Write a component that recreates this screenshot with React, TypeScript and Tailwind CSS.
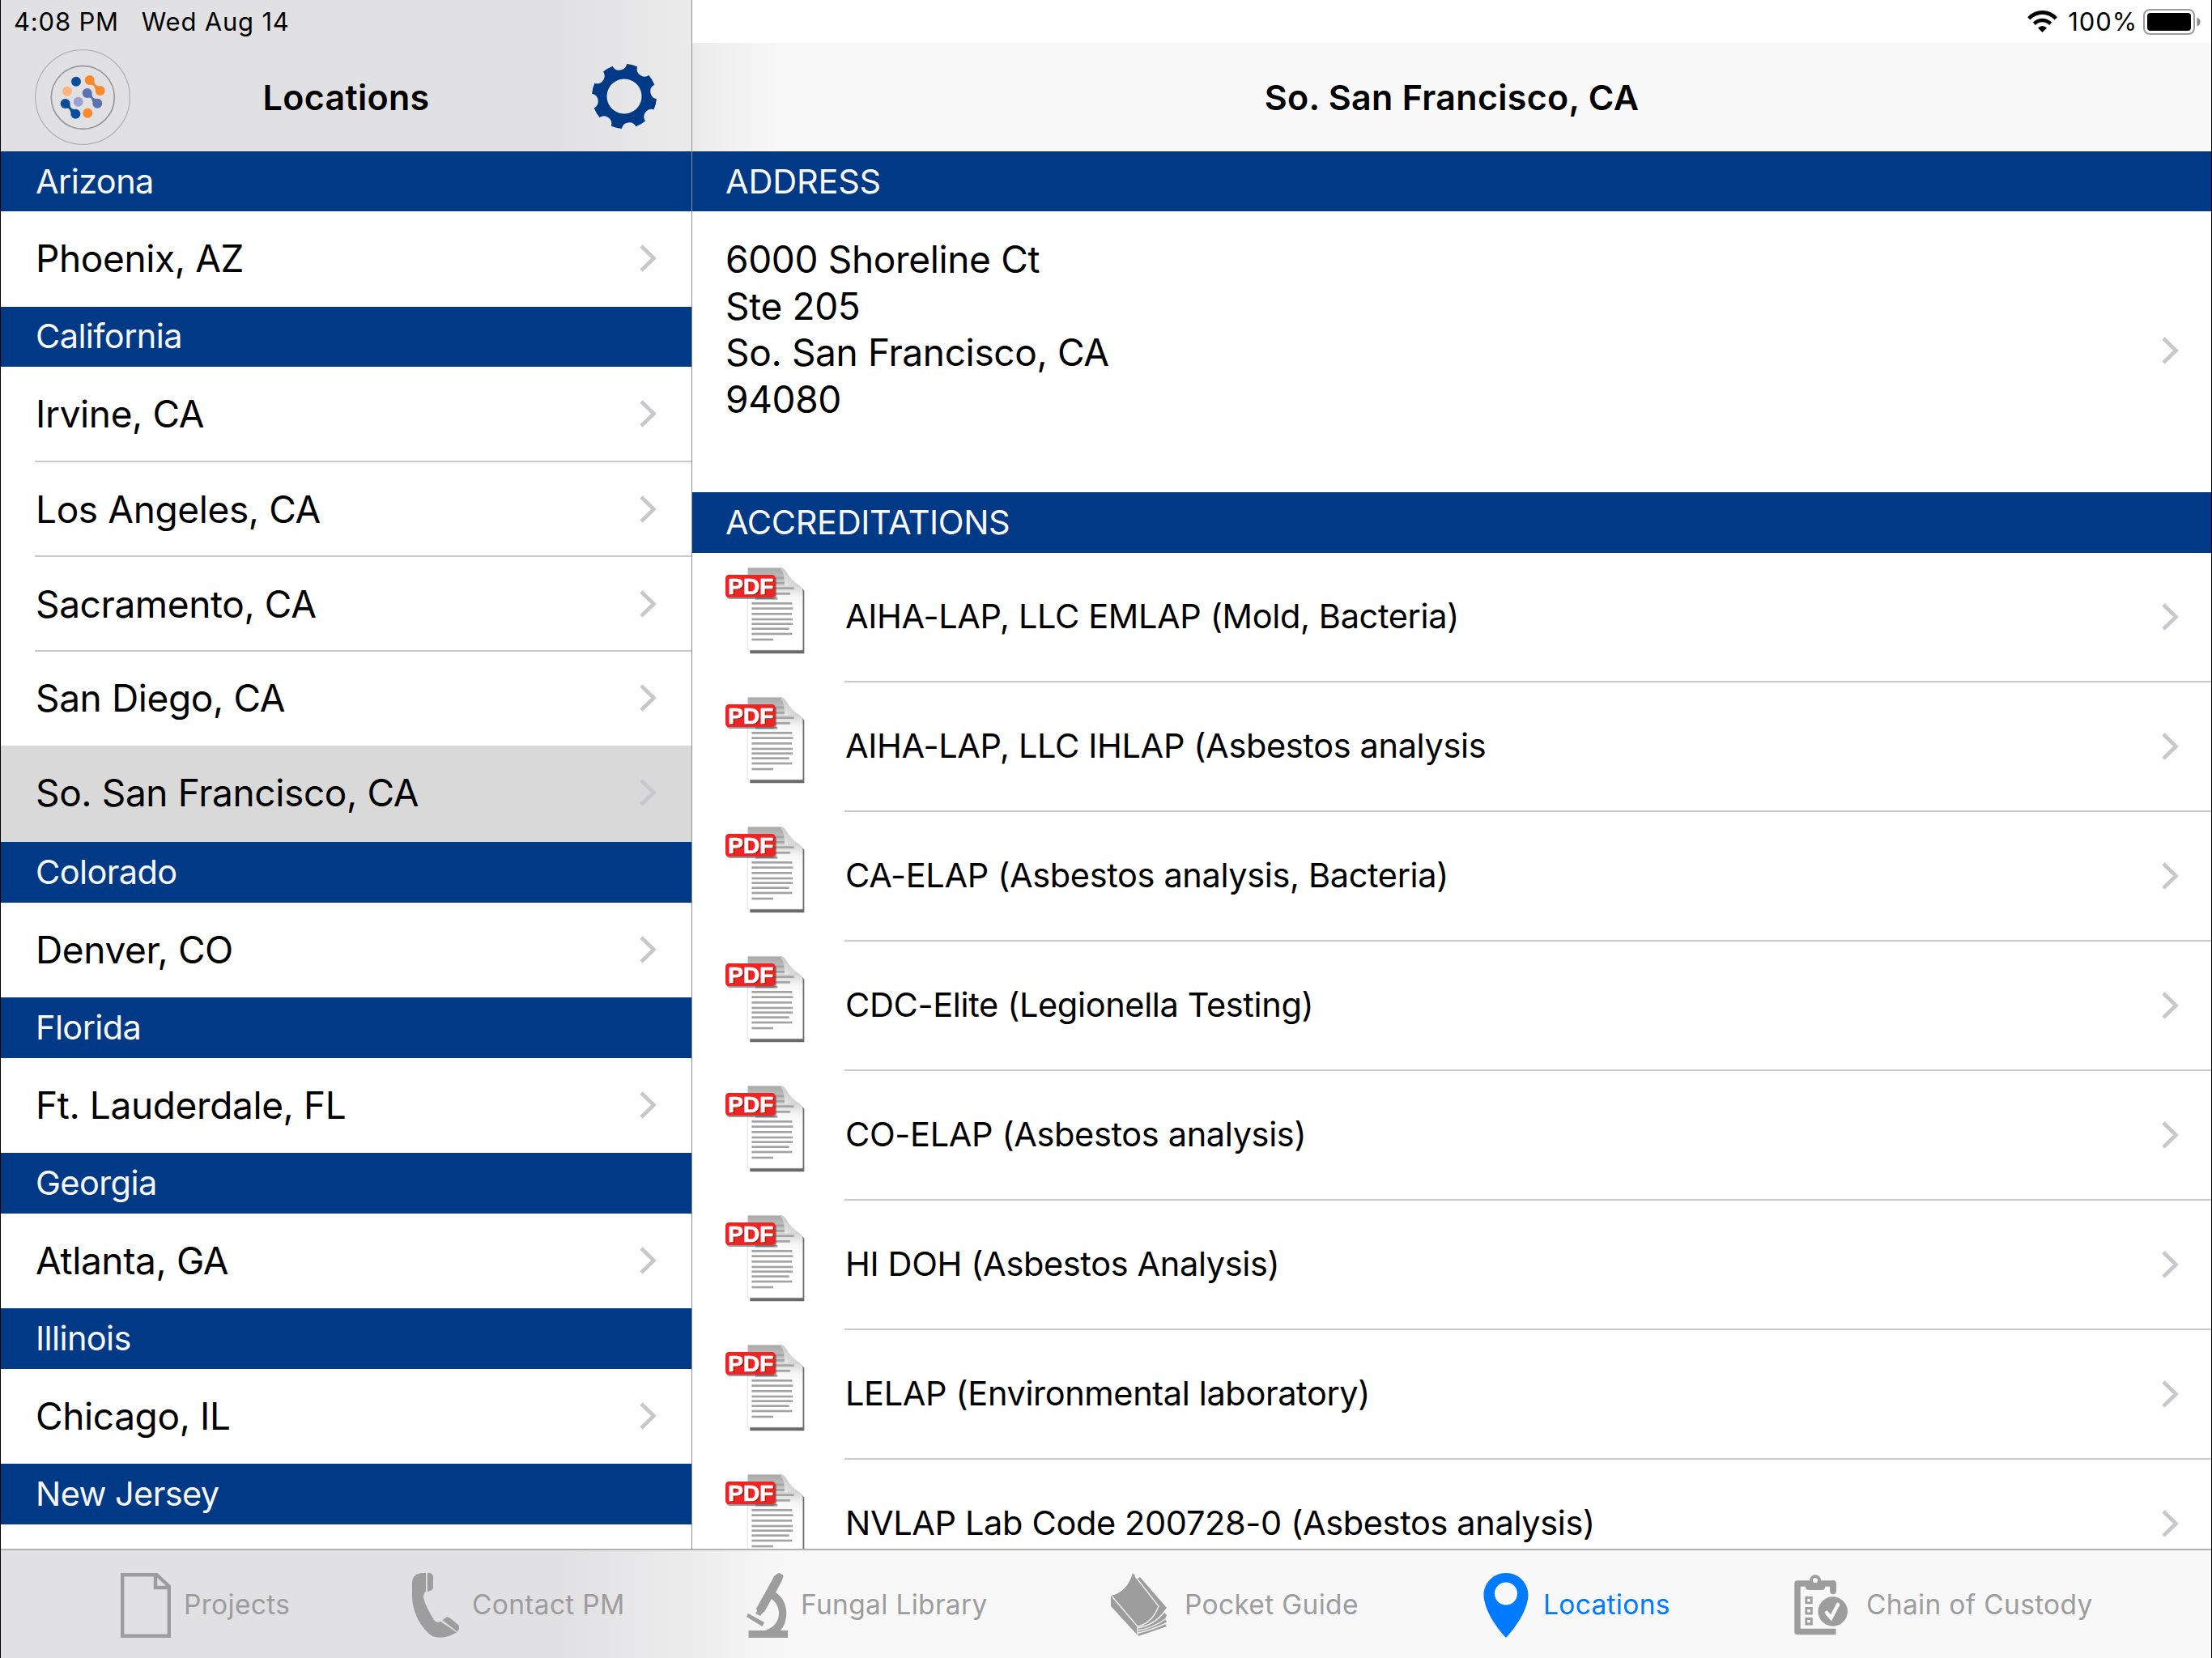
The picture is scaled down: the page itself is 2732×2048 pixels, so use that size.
import type { ReactNode } from 'react';
import { clsx } from 'clsx';

interface Section {
  state: string;
  cities: string[];
}

const SELECTED = 'So. San Francisco, CA';

const sections: Section[] = [
  { state: 'Arizona', cities: ['Phoenix, AZ'] },
  {
    state: 'California',
    cities: ['Irvine, CA', 'Los Angeles, CA', 'Sacramento, CA', 'San Diego, CA', 'So. San Francisco, CA'],
  },
  { state: 'Colorado', cities: ['Denver, CO'] },
  { state: 'Florida', cities: ['Ft. Lauderdale, FL'] },
  { state: 'Georgia', cities: ['Atlanta, GA'] },
  { state: 'Illinois', cities: ['Chicago, IL'] },
  { state: 'New Jersey', cities: [] },
];

const accreditations = [
  'AIHA-LAP, LLC EMLAP (Mold, Bacteria)',
  'AIHA-LAP, LLC IHLAP (Asbestos analysis',
  'CA-ELAP (Asbestos analysis, Bacteria)',
  'CDC-Elite (Legionella Testing)',
  'CO-ELAP (Asbestos analysis)',
  'HI DOH (Asbestos Analysis)',
  'LELAP (Environmental laboratory)',
  'NVLAP Lab Code 200728-0 (Asbestos analysis)',
];

const Chevron = () => (
  <svg className="h-[34px] w-[21px] shrink-0" viewBox="0 0 21 34" fill="none" stroke="#c7c7cc" strokeWidth="4.6">
    <path d="M2 2l15.5 15L2 32" />
  </svg>
);

const Logo = () => (
  <svg className="h-[118px] w-[118px]" viewBox="69 33 354 354">
    <circle cx="246" cy="210" r="175" fill="none" stroke="#b4b4b6" strokeWidth="4" />
    <circle cx="247" cy="211" r="117" fill="none" stroke="#979799" strokeWidth="5" />
    <g fill="#0a4c9b">
      <circle cx="222" cy="152" r="18" />
      <circle cx="182" cy="234" r="18" />
      <circle cx="220" cy="272" r="18" />
      <path d="M186 251Q199 249 202 268L216 255Q201 255 199 238Z" />
    </g>
    <g fill="#f98a2c">
      <circle cx="272" cy="147" r="18" />
      <circle cx="311" cy="186" r="18" />
      <circle cx="265" cy="269" r="18" />
      <path d="M276 164Q290 163 293 182L307 169Q291 168 289 151Z" />
    </g>
    <g fill="#5c70b4">
      <circle cx="263" cy="195" r="18" />
      <circle cx="301" cy="233" r="18" />
      <path d="M267 212Q280 210 283 229L297 216Q282 216 280 199Z" />
    </g>
    <circle cx="189" cy="188" r="18" fill="#fdb47c" />
    <circle cx="230" cy="227" r="18" fill="#9aa0d2" />
  </svg>
);

// Eight teeth at 45° steps, round notches between them
const gearPath = (() => {
  const point = (deg: number) => {
    const a = ((deg - 90) * Math.PI) / 180;
    return `${(40 + 40 * Math.cos(a)).toFixed(2)} ${(40 + 40 * Math.sin(a)).toFixed(2)}`;
  };
  let d = `M${point(4.5)}`;
  for (let i = 0; i < 8; i++) {
    const mid = 14.2 + i * 45;
    d += `A40 40 0 0 1 ${point(mid + 9.7)}A9.4 9.4 0 0 0 ${point(mid + 35.3)}`;
  }
  return `${d}ZM40 18.5a21.5 21.5 0 1 0 .01 0Z`;
})();

const Gear = () => (
  <svg className="mb-[3px] h-20 w-20" viewBox="0 0 80 80">
    <path d={gearPath} fill="#003a87" fillRule="evenodd" />
  </svg>
);

const pdfLines = [
  [206, 496, 150],
  [206, 515, 153],
  [206, 535, 149],
  [206, 555, 152],
  [206, 572, 152],
  [206, 590, 139],
  [206, 609, 150],
  [206, 630, 80],
  [280, 402, 46],
  [280, 421, 48],
  [280, 440, 83],
  [280, 460, 69],
  [220, 478, 82],
];

const PdfIcon = () => (
  <svg className="h-[109px] w-[100px]" viewBox="106 360 300 327">
    <defs>
      <linearGradient id="pdfPage" x1="0" y1="0" x2="0" y2="1">
        <stop offset="0" stopColor="#a9a9a9" />
        <stop offset=".12" stopColor="#bcbcbc" />
        <stop offset=".35" stopColor="#f6f6f6" />
        <stop offset=".5" stopColor="#ffffff" />
      </linearGradient>
      <linearGradient id="pdfFold" x1="0" y1="1" x2="1" y2="0">
        <stop offset="0" stopColor="#f4f4f4" />
        <stop offset=".5" stopColor="#cfcfcf" />
        <stop offset="1" stopColor="#909090" />
      </linearGradient>
    </defs>
    <path d="M200 668H394V440L401 450V682H200Z" fill="#6a6a6a" />
    <path
      d="M192 364H312Q324 364 334 380Q352 412 388 434Q395 440 395 452V669H192Z"
      fill="url(#pdfPage)"
      stroke="#d8d8d8"
      strokeWidth="2"
    />
    {pdfLines.map(([x, y, w]) => (
      <rect key={y} x={x} y={y - 4} width={w} height="8" fill="#a3a3a3" />
    ))}
    <path d="M312 364Q324 364 334 380Q352 412 388 434Q352 422 328 433Q332 390 312 364Z" fill="url(#pdfFold)" />
    <rect x="113" y="396" width="185" height="84" rx="13" fill="#555" opacity=".6" />
    <rect x="109" y="390" width="185" height="84" rx="13" fill="#ee2323" />
    <g fontFamily="Liberation Sans, sans-serif" fontWeight="700" fontSize="84">
      <text x="123" y="466" textLength="168" fill="#7c1010">PDF</text>
      <text x="119" y="462" textLength="168" fill="#fff" stroke="#fff" strokeWidth="2">PDF</text>
    </g>
  </svg>
);

const DocIcon = () => (
  <svg className="h-20 w-[62px]" viewBox="0 0 62 80" fill="none" stroke="currentColor" strokeWidth="4.4">
    <path d="M2.2 2.2H44.5L59.8 16.5V77.8H2.2ZM43 2V18H60" />
  </svg>
);

const PhoneIcon = () => (
  <svg className="h-20 w-[58px]" viewBox="0 0 58 80" fill="currentColor">
    <path d="M17 0H12Q0 1 0 13V27C0 50 12 69 25 78Q38 83 55 73.500L35.500 60Q29 62 27 58C21 48 16 39 14 30Q14 25 17 22.500Z" />
    <path d="M18.800 0H22Q26 1 26 5V18Q25 22 18.800 23Z" />
    <path d="M37.500 58.300L42.500 54.500Q44.500 54 46.500 55.500L57 64Q59 66 58 69L56 72.800Z" />
  </svg>
);

const MicroscopeIcon = () => (
  <svg className="h-20 w-[51px]" viewBox="0 0 51 80" fill="currentColor">
    <path d="M38 1Q40-.8 42 .8L45 2.500Q46 4 45 5L44 9L36 24C45 30 49 39 49.300 50Q49 63 42 71H51V80H2.500V71H23C35 67 40 59 40 49Q39.500 38 31 32L22 48L20 49L17 53L11 50L13 47L12 44L32 8L34 4Z" />
    <path d="M2 50L22 61L19.500 66L0 54Z" />
  </svg>
);

const BookIcon = () => (
  <svg className="h-20 w-[70px]" viewBox="0 0 70 80">
    <path
      d="M27 0L33 7L36 5L69 43L65 48L69 52L67 57L69 60L67 63L69 66L34 78L0 41V28Q20 24 27 0Z"
      fill="currentColor"
    />
    <path
      d="M1 28.500L33 66V78M33 66Q51 62 59 41L30 4M33 68Q54 64 66 48M34 71Q54 67 67 57M34 74Q54 69 68 62"
      fill="none"
      stroke="#f1f1f1"
      strokeWidth="1.4"
    />
  </svg>
);

const PinIcon = () => (
  <svg className="h-20 w-14" viewBox="0 0 56 80">
    <path
      d="M28 0C44 0 55.500 13 55.500 27C55 46 40 67 28 80C16 67 1 46 .5 27C.5 13 12 0 28 0ZM28 11.500A14 14 0 1 0 28 39.500A14 14 0 1 0 28 11.500Z"
      fill="currentColor"
      fillRule="evenodd"
    />
  </svg>
);

const ClipboardIcon = () => (
  <svg className="h-20 w-[66px]" viewBox="0 0 66 80">
    <g fill="none" stroke="currentColor">
      <path d="M48 22V13Q48 13 47 13H4V72.500H51.500" strokeWidth="7.500" strokeLinejoin="round" />
      <path d="M48 13V22.500" strokeWidth="7.500" strokeLinecap="round" />
      <circle cx="26" cy="9.300" r="5" strokeWidth="4" />
      <path d="M14.800 30.300h6.500v6.500h-6.500zM14.800 43.500h6.500v6.500h-6.500zM14.800 56.500h6.500v6.500h-6.500z" strokeWidth="2.800" />
    </g>
    <path d="M14 12H38V18Q38 21 34 21H18Q14 21 14 17Z" fill="currentColor" />
    <circle cx="26" cy="9.300" r="3" fill="#f8f8f8" />
    <circle cx="47.700" cy="47.500" r="18.200" fill="currentColor" />
    <path d="M40 49L45.500 55.500L54 39" fill="none" stroke="#f8f8f8" strokeWidth="4.600" strokeLinecap="round" />
  </svg>
);

const WifiIcon = () => (
  <svg className="h-[27px] w-[37px]" viewBox="0 0 37 27">
    <path d="M1.800 9.800Q9 2.400 18.500 2.400T35.200 9.800" fill="none" stroke="#000" strokeWidth="4.800" />
    <path d="M8.300 16.300Q13 12 18.500 12T28.700 16.300" fill="none" stroke="#000" strokeWidth="4.600" />
    <path d="M13 21.500Q18.500 16.500 24 21.500L18.500 27Z" />
  </svg>
);

const BatteryIcon = () => (
  <svg className="h-8 w-[71px]" viewBox="0 0 71 32">
    <rect x="1" y="1" width="62" height="30" rx="7" fill="none" stroke="#9b9b9b" strokeWidth="2" />
    <rect x="5" y="5" width="54" height="22" rx="4" />
    <path d="M66.500 10.500Q70.500 12 70.500 16T66.500 21.500Z" fill="#8a8a8a" />
  </svg>
);

const SectionHeader = ({ className, children }: { className: string; children: ReactNode }) => (
  <div className={clsx('flex shrink-0 items-center bg-[#003a87] text-[41.5px] text-[#f7f7f7]', className)}>
    {children}
  </div>
);

const tabs = [
  { label: 'Projects', icon: <DocIcon />, tabClass: 'w-[360px]', iconClass: 'w-[78px]' },
  { label: 'Contact PM', icon: <PhoneIcon />, tabClass: 'w-[413px]', iconClass: 'w-[74px]' },
  { label: 'Fungal Library', icon: <MicroscopeIcon />, tabClass: 'w-[450px]', iconClass: 'w-[67px]' },
  { label: 'Pocket Guide', icon: <BookIcon />, tabClass: 'w-[460px]', iconClass: 'w-[91px]' },
  { label: 'Locations', icon: <PinIcon />, tabClass: 'w-[384px]', iconClass: 'w-[74px]' },
  { label: 'Chain of Custody', icon: <ClipboardIcon />, tabClass: 'w-[420px]', iconClass: 'w-[89px]' },
];

const rowHeight = (city: string) => {
  if (city === SELECTED) return 'h-[119px] bg-[#d9d9d9] pb-px';
  if (city === 'San Diego, CA') return 'h-[116px]';
  if (city === 'Phoenix, AZ') return 'h-[118px]';
  if (city === 'Irvine, CA') return 'h-[118px]';
  return 'h-[117px]';
};

const Sidebar = () => (
  <aside className="flex w-[854px] shrink-0 flex-col overflow-hidden border-r border-[#8e8e93] bg-white">
    <div className="flex h-[187px] shrink-0 flex-col bg-[linear-gradient(90deg,#e1e1e3_0,#e1e1e3_690px,#ebebec_853px)]">
      <div className="flex h-[53px] items-center gap-[28px] pl-4 text-[31px] tracking-[0.8px]">
        <span>4:08 PM</span>
        <span>Wed Aug 14</span>
      </div>
      <div className="grid h-[134px] grid-cols-[118px_1fr_118px] items-center pr-[42px] pl-[42px]">
        <Logo />
        <h1 className="text-center text-[43px] font-semibold tracking-[0.3px]">Locations</h1>
        <div className="flex justify-end pr-px">
          <Gear />
        </div>
      </div>
    </div>
    {sections.map(({ state, cities }, i) => (
      <section key={state}>
        <SectionHeader
          className={clsx(
            'pl-[43px] tracking-[-0.6px]',
            i < 2 ? 'h-[74px]' : 'h-[75px]',
            i === 0 && 'border-t border-[#002a62]',
          )}
        >
          {state}
        </SectionHeader>
        {cities.map((city, j) => (
          <div key={city} className={clsx('flex pl-[42px]', rowHeight(city))}>
            <div
              className={clsx(
                'flex grow items-center justify-between pr-[43px]',
                j < cities.length - 2 ? 'border-b-2 border-[#c8c7cc]' : 'pb-[2px]',
              )}
            >
              <span className="pl-px text-[46px] tracking-[-0.38px]">{city}</span>
              <Chevron />
            </div>
          </div>
        ))}
      </section>
    ))}
  </aside>
);

const Detail = () => (
  <main className="flex grow flex-col overflow-hidden bg-white">
    <div className="flex h-[53px] shrink-0 items-center justify-end pr-[13px]">
      <WifiIcon />
      <span className="mr-[7px] ml-[13px] text-[31px] tracking-[0.9px]">100%</span>
      <BatteryIcon />
    </div>
    <div className="flex h-[134px] shrink-0 items-center justify-center bg-[linear-gradient(90deg,#ebebec_0,#f8f8f8_110px)]">
      <h2 className="text-[43px] font-semibold tracking-[0.3px]">So. San Francisco, CA</h2>
    </div>
    <SectionHeader className="h-[74px] border-t border-[#002a62] pl-[41px] tracking-[-0.2px]">ADDRESS</SectionHeader>
    <div className="flex h-[347px] shrink-0 items-center justify-between pr-10 pl-[41px]">
      <address className="self-start pt-[31px] text-[46px] leading-[57.5px] tracking-[-0.35px] not-italic">
        6000 Shoreline Ct
        <br />
        Ste 205
        <br />
        So. San Francisco, CA
        <br />
        94080
      </address>
      <div className="pb-[3px]">
        <Chevron />
      </div>
    </div>
    <SectionHeader className="h-[75px] pl-[41px] tracking-[-0.37px]">ACCREDITATIONS</SectionHeader>
    {accreditations.map((name) => (
      <div key={name} className="flex h-40 shrink-0 pl-10">
        <div className="w-[148px] pt-[17px]">
          <PdfIcon />
        </div>
        <div className="flex grow items-center justify-between border-b-2 border-[#c8c7cc] pr-10">
          <span className="pl-px text-[41.5px] tracking-[-0.36px]">{name}</span>
          <div className="pb-px">
            <Chevron />
          </div>
        </div>
      </div>
    ))}
  </main>
);

export default function App() {
  return (
    <div className="flex h-[2048px] w-[2732px] flex-col overflow-hidden border-x border-black bg-white font-['Inter',sans-serif] leading-none whitespace-nowrap text-black">
      <div className="flex h-[1913px] shrink-0">
        <Sidebar />
        <Detail />
      </div>
      <nav className="flex h-[135px] shrink-0 items-center border-t-2 border-[#b2b2b2] bg-[linear-gradient(90deg,#e1e1e3_0,#e1e1e3_690px,#ededee_860px,#f8f8f8_970px)] pt-[3px] pl-[148px]">
        {tabs.map(({ label, icon, tabClass, iconClass }) => (
          <div
            key={label}
            className={clsx(
              'flex shrink-0 items-center',
              tabClass,
              label === 'Locations' ? 'text-[#007aff]' : 'text-[#9d9d9d]',
            )}
          >
            <span className={iconClass}>{icon}</span>
            <span className="text-[33.5px] tracking-[0.32px]">{label}</span>
          </div>
        ))}
      </nav>
    </div>
  );
}
